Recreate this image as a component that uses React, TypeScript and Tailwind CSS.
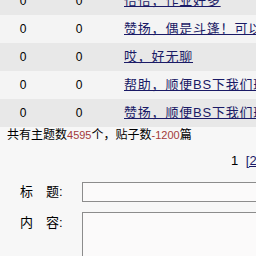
import React from "react";

const rows = [
  "恰恰，作业好多",
  "赞扬，偶是斗篷！可以",
  "哎，好无聊",
  "帮助，顺便BS下我们班",
  "赞扬，顺便BS下我们班",
];

export default function App() {
  return (
    <div
      className="w-[256px] h-[256px] overflow-hidden bg-[#f7f7f7] text-[12px] text-black"
      style={{ fontFamily: '"Liberation Sans", "Noto Sans CJK SC", sans-serif' }}
    >
      <div className="-mt-[13px] flex flex-col">
        {rows.map((t, i) => (
          <div
            key={i}
            className={`flex items-center h-[28px] ${i % 2 === 0 ? "bg-[#e8e8e8]" : "bg-[#f4f4f4]"}`}
          >
            <div className="w-[46px] shrink-0 text-center">0</div>
            <div className="w-[66px] shrink-0 text-center">0</div>
            <div className="pl-[12px] whitespace-nowrap text-[13px] tracking-[0.8px] text-[#1a1a66] underline">
              {t}
            </div>
          </div>
        ))}
      </div>
      <div className="h-[16px] leading-[16px] pl-[7px] whitespace-nowrap">
        共有主题数<span className="text-[11px] text-[#a33a3a]">4595</span>个，贴子数
        <span className="text-[11px] text-[#a33a3a]">-1200</span>篇
      </div>
      <div className="mt-[11px] h-[14px] leading-[14px] pl-[231px] whitespace-nowrap text-[13px]">
        1 <span className="ml-[4px] underline text-[#1a1a66]">[2]</span>
      </div>
      <div className="mt-[14px] flex items-center">
        <div className="w-[82px] shrink-0 pl-[20px] text-[13px] whitespace-nowrap">
          标<span className="ml-[13px]">题</span>:
        </div>
        <div className="h-[20px] w-[200px] shrink-0 border border-[#8c8c8c] bg-[#fbfafa]" />
      </div>
      <div className="mt-[10px] flex items-start">
        <div className="w-[82px] shrink-0 pl-[20px] pt-[1px] text-[13px] whitespace-nowrap">
          内<span className="ml-[13px]">容</span>:
        </div>
        <div className="h-[80px] w-[200px] shrink-0 border border-[#8c8c8c] bg-[#fbfafa]" />
      </div>
    </div>
  );
}
